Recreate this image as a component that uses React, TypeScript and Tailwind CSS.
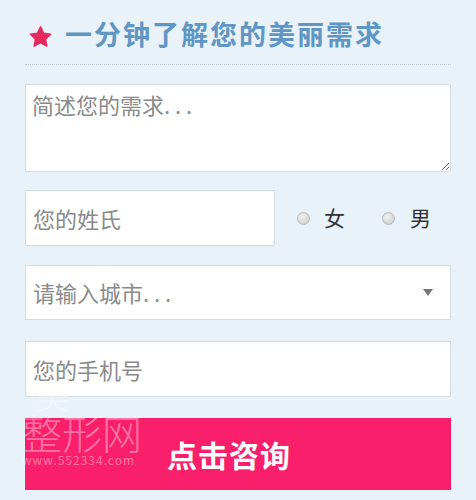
export default function App() {
  const font = { fontFamily: '"Noto Sans CJK SC", "Noto Sans", sans-serif' }

  return (
    <div style={font} className="relative min-h-[500px] w-full overflow-hidden bg-[#e9f1f9] px-[25px] pt-[17px]">
      <div className="flex items-center gap-[12px] border-b border-dotted border-[#bfc9d3] pb-[13px] pl-[3px]">
        <svg width="25" height="24" viewBox="0 0 24 24" className="mt-[5px]">
          <path
            d="M12 1.8l3.1 6.5 7 .9-5.1 4.9 1.3 7L12 17.7l-6.3 3.4 1.3-7L1.9 9.2l7-.9z"
            fill="#e62a60"
            stroke="#e62a60"
            strokeLinejoin="round"
            strokeWidth="1.5"
          />
        </svg>
        <h1 className="text-[27px] font-bold leading-[34px] tracking-[2px] text-[#6096c4]">一分钟了解您的美丽需求</h1>
      </div>

      <form className="mt-[19px] flex flex-col" onSubmit={(e) => e.preventDefault()}>
        <textarea
          placeholder="简述您的需求. . ."
          className="h-[88px] w-full border border-[#d3dbe3] bg-white px-[6px] py-[4px] text-[22px] leading-[30px] text-[#333] outline-none placeholder:text-[#8a8a8a]"
        />

        <div className="mt-[18px] flex h-[56px] items-center">
          <input
            type="text"
            placeholder="您的姓氏"
            className="h-full w-[250px] border border-[#d3dbe3] bg-white px-[7px] text-[22px] text-[#333] outline-none placeholder:text-[#8a8a8a]"
          />
          <label className="ml-[22px] flex items-center gap-[14px] text-[21px] text-[#333]">
            <span className="mt-[1px] h-[13px] w-[13px] rounded-full border border-[#b9b9b9] bg-[radial-gradient(circle_at_40%_35%,#f2f2f2,#c9c9c9)]" />
            女
          </label>
          <label className="ml-[37px] flex items-center gap-[15px] text-[21px] text-[#333]">
            <span className="mt-[1px] h-[13px] w-[13px] rounded-full border border-[#b9b9b9] bg-[radial-gradient(circle_at_40%_35%,#f2f2f2,#c9c9c9)]" />
            男
          </label>
        </div>

        <div className="mt-[19px] flex h-[55px] items-center justify-between border border-[#d3dbe3] bg-white pl-[7px] pr-[17px]">
          <span className="text-[22px] text-[#8a8a8a]">请输入城市. . .</span>
          <span className="h-0 w-0 border-x-[5px] border-t-[7px] border-x-transparent border-t-[#777]" />
        </div>

        <input
          type="text"
          placeholder="您的手机号"
          className="mt-[21px] h-[56px] w-full border border-[#d3dbe3] bg-white px-[7px] text-[22px] text-[#333] outline-none placeholder:text-[#8a8a8a]"
        />

        <button
          type="submit"
          className="mt-[21px] h-[72px] w-full bg-[#fa1f6b] pr-[18px] text-[30px] font-bold tracking-[1px] text-white"
        >
          点击咨询
        </button>
      </form>

      <div className="pointer-events-none absolute left-[22px] top-[378px] flex flex-col leading-none text-white/40">
        <span className="pl-[14px] text-[34px] font-light">美</span>
        <span className="text-[40px] font-light">整形网</span>
        <span className="mt-[2px] text-[12px] tracking-[1px]">www.552334.com</span>
      </div>
    </div>
  )
}
